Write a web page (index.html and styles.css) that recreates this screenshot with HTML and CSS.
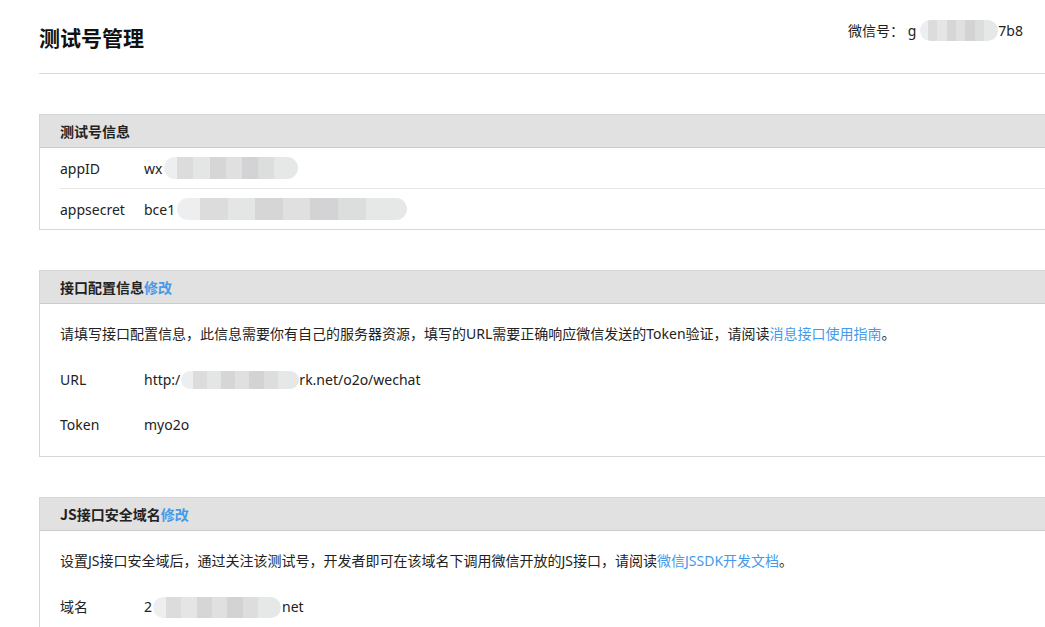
FILE: index.html
```html
<!DOCTYPE html>
<html lang="zh-CN">
<head>
<meta charset="utf-8">
<title>测试号管理</title>
<link rel="stylesheet" href="styles.css">
</head>
<body>
<div class="page">
  <div class="topbar">
    <h1 class="title">测试号管理</h1>
    <div class="account">微信号： g<span class="blur blur-acc"></span>7b8</div>
  </div>

  <div class="panel panel-first">
    <div class="panel-head">测试号信息</div>
    <div class="panel-rows">
      <div class="row"><span class="label">appID</span><span class="value">wx<span class="blur blur-id"></span></span></div>
      <div class="row"><span class="label">appsecret</span><span class="value">bce1<span class="blur blur-secret"></span></span></div>
    </div>
  </div>

  <div class="panel">
    <div class="panel-head">接口配置信息<a class="link">修改</a></div>
    <div class="panel-body">
      <p class="desc">请填写接口配置信息，此信息需要你有自己的服务器资源，填写的URL需要正确响应微信发送的Token验证，请阅读<a class="link">消息接口使用指南</a>。</p>
      <div class="field"><span class="label">URL</span><span class="value">http:/<span class="blur blur-url"></span>rk.net/o2o/wechat</span></div>
      <div class="field field-next"><span class="label">Token</span><span class="value">myo2o</span></div>
    </div>
  </div>

  <div class="panel">
    <div class="panel-head">JS接口安全域名<a class="link">修改</a></div>
    <div class="panel-body">
      <p class="desc">设置JS接口安全域后，通过关注该测试号，开发者即可在该域名下调用微信开放的JS接口，请阅读<a class="link">微信JSSDK开发文档</a>。</p>
      <div class="field"><span class="label">域名</span><span class="value">2<span class="blur blur-domain"></span>net</span></div>
    </div>
  </div>
</div>
</body>
</html>
```

FILE: styles.css
```css
html, body {
  margin: 0;
  padding: 0;
  overflow: hidden;
  background: #ffffff;
}

body {
  font-family: "Noto Sans", "Noto Sans CJK SC", sans-serif;
  font-size: 14px;
  color: #222222;
}

.page {
  margin-left: 39px;
  width: 1030px;
}

.topbar {
  display: flex;
  justify-content: space-between;
  align-items: flex-start;
  height: 74px;
  border-bottom: 1px solid #d9d9d9;
  padding-right: 46px;
  box-sizing: border-box;
}

.title {
  margin: 22px 0 0 0;
  font-size: 21px;
  line-height: 30px;
  font-weight: bold;
  color: #111111;
  font-family: "Noto Sans CJK SC", sans-serif;
}

.account {
  margin-top: 20px;
  line-height: 20px;
  display: flex;
  align-items: center;
}

.blur {
  display: inline-block;
  border-radius: 11px;
  vertical-align: middle;
  background: linear-gradient(90deg,
    #eceeef 0, #eceeef 10%,
    #dcdcdc 10%, #dcdcdc 22%,
    #e4e5e5 22%, #e4e5e5 34%,
    #d6d6d6 34%, #d6d6d6 46%,
    #dfe0df 46%, #dfe0df 58%,
    #d3d3d5 58%, #d3d3d5 70%,
    #dcdedd 70%, #dcdedd 82%,
    #e6e7e7 82%, #e6e7e7 100%);
}

.blur-acc { width: 78px; height: 21px; margin-left: 4px; margin-right: 0; }
.blur-id { width: 134px; height: 22px; margin-left: 2px; }
.blur-secret { width: 230px; height: 22px; margin-left: 2px; }
.blur-url { width: 118px; height: 18px; margin-left: 1px; }
.blur-domain { width: 128px; height: 21px; margin-left: 1px; margin-right: 1px; }

.panel {
  border: 1px solid #d6d6d6;
  margin-top: 40px;
}

.panel-head {
  height: 32px;
  line-height: 32px;
  background: #e1e1e1;
  border-bottom: 1px solid #cccccc;
  padding-left: 20px;
  font-weight: bold;
  font-family: "Noto Sans CJK SC", sans-serif;
  font-size: 14px;
  color: #222222;
}

.link {
  color: #459ae9;
  text-decoration: none;
  cursor: pointer;
}

.panel-head .link {
  font-weight: bold;
}

.panel-rows {
  padding-left: 20px;
}

.row {
  height: 40px;
  display: flex;
  align-items: center;
}

.row + .row {
  border-top: 1px solid #e6e6e6;
}

.label {
  width: 84px;
  flex: none;
}

.value {
  display: flex;
  align-items: center;
}

.panel-body {
  padding: 20px 20px 21px 20px;
}

.desc {
  margin: 0;
  line-height: 20px;
  font-size: 14px;
}

.field {
  display: flex;
  align-items: center;
  line-height: 20px;
  height: 20px;
  margin-top: 26px;
}

.field-next {
  margin-top: 25px;
}
```
